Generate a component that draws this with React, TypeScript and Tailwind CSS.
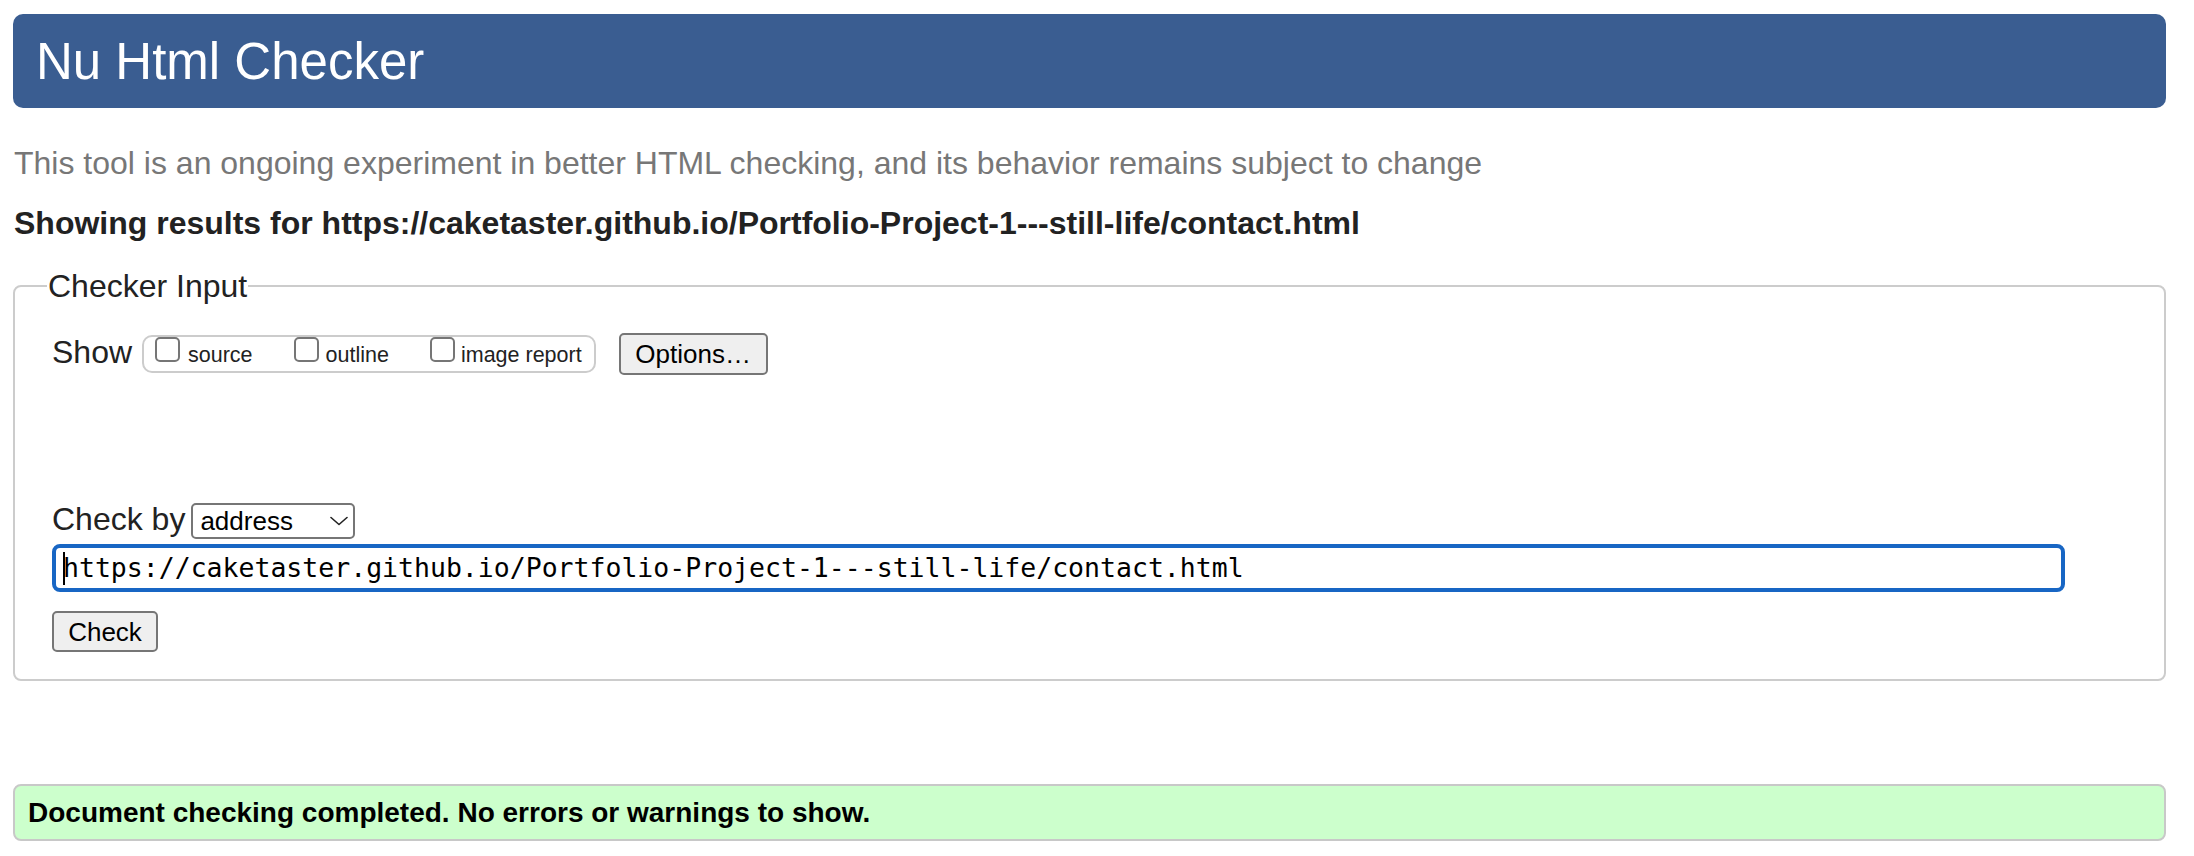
import React from "react";

function Box({ first = false }: { first?: boolean }) {
  return (
    <span
      className={
        "block h-[25px] w-[25px] shrink-0 rounded-[5px] border-2 border-[#767676] bg-white " +
        (first ? "" : "ml-[41px]")
      }
    />
  );
}

export default function App() {
  return (
    <div className="min-h-[856px] bg-white pl-[13px] pr-[28px] pt-[14px] font-['Liberation_Sans',Arial,Helvetica,sans-serif] text-[#222]">
      <h1 className="flex h-[94px] items-center rounded-[10px] bg-[#3a5d91] pl-[23px] text-[51px] font-normal leading-none text-white">
        Nu Html Checker
      </h1>
      <p className="ml-[1px] mt-[37px] text-[32px] leading-[36px] text-[#777]">
        This tool is an ongoing experiment in better HTML checking, and its behavior remains subject to change
      </p>
      <p className="ml-[1px] mt-[24px] text-[32px] font-bold leading-[36px] text-[#222]">
        Showing results for https://caketaster.github.io/Portfolio-Project-1---still-life/contact.html
      </p>
      <fieldset className="mt-[27px] rounded-[8px] border-2 border-[#ccc] pb-[27px] pl-[32px] pr-[30px]">
        <legend className="px-[1px] text-[32px] leading-[36px]">Checker Input</legend>
        <div className="ml-[5px] pt-[29px]">
          <div className="flex h-[42px] items-center">
            <span className="mb-[4px] text-[32px] leading-[36px]">Show</span>
            <div className="ml-[10px] flex h-[38px] items-baseline rounded-[10px] border-2 border-[#ccc] pl-[11px] pr-[12px]">
              <Box first />
              <span className="ml-[8px] text-[21.5px] leading-[24px]">source</span>
              <Box />
              <span className="ml-[7px] text-[21.5px] leading-[24px]">outline</span>
              <Box />
              <span className="ml-[6px] text-[21.5px] leading-[24px]">image report</span>
            </div>
            <button className="ml-[23px] flex h-[42px] w-[149px] items-center justify-center rounded-[5px] border-2 border-[#767676] bg-[#efefef] text-[26px] leading-none text-black">
              Options…
            </button>
          </div>

          <div className="mt-[128px] flex h-[36px] items-center">
            <span className="mb-[4px] text-[32px] leading-[36px]">Check by</span>
            <div className="ml-[6px] flex h-[36px] w-[164px] items-center justify-between rounded-[5px] border-2 border-[#767676] bg-white pl-[7px] pr-[5px] text-[26px] leading-none text-black">
              <span>address</span>
              <svg width="18" height="10" viewBox="0 0 18 10" fill="none">
                <path d="M1 1.5 L9 8.5 L17 1.5" stroke="#222" strokeWidth="1.6" strokeLinecap="round" strokeLinejoin="round" />
              </svg>
            </div>
          </div>

          <div className="mt-[5px] flex h-[48px] w-[2013px] items-center rounded-[8px] border-4 border-[#1866c4] bg-white pl-[7px]">
            <span className="mr-[-2px] block h-[33px] w-[2px] bg-black" />
            <span className="font-['DejaVu_Sans_Mono',Menlo,monospace] text-[26.5px] leading-none text-black">
              https://caketaster.github.io/Portfolio-Project-1---still-life/contact.html
            </span>
          </div>

          <button className="mt-[19px] flex h-[41px] w-[106px] items-center justify-center rounded-[5px] border-2 border-[#767676] bg-[#efefef] text-[26px] leading-none text-black">
            Check
          </button>
        </div>
      </fieldset>

      <div className="mt-[103px] flex h-[57px] items-center rounded-[8px] border-2 border-[#c8c8c8] bg-[#ccffcc] pl-[13px] text-[28px] font-bold leading-none text-black">
        Document checking completed. No errors or warnings to show.
      </div>
    </div>
  );
}
